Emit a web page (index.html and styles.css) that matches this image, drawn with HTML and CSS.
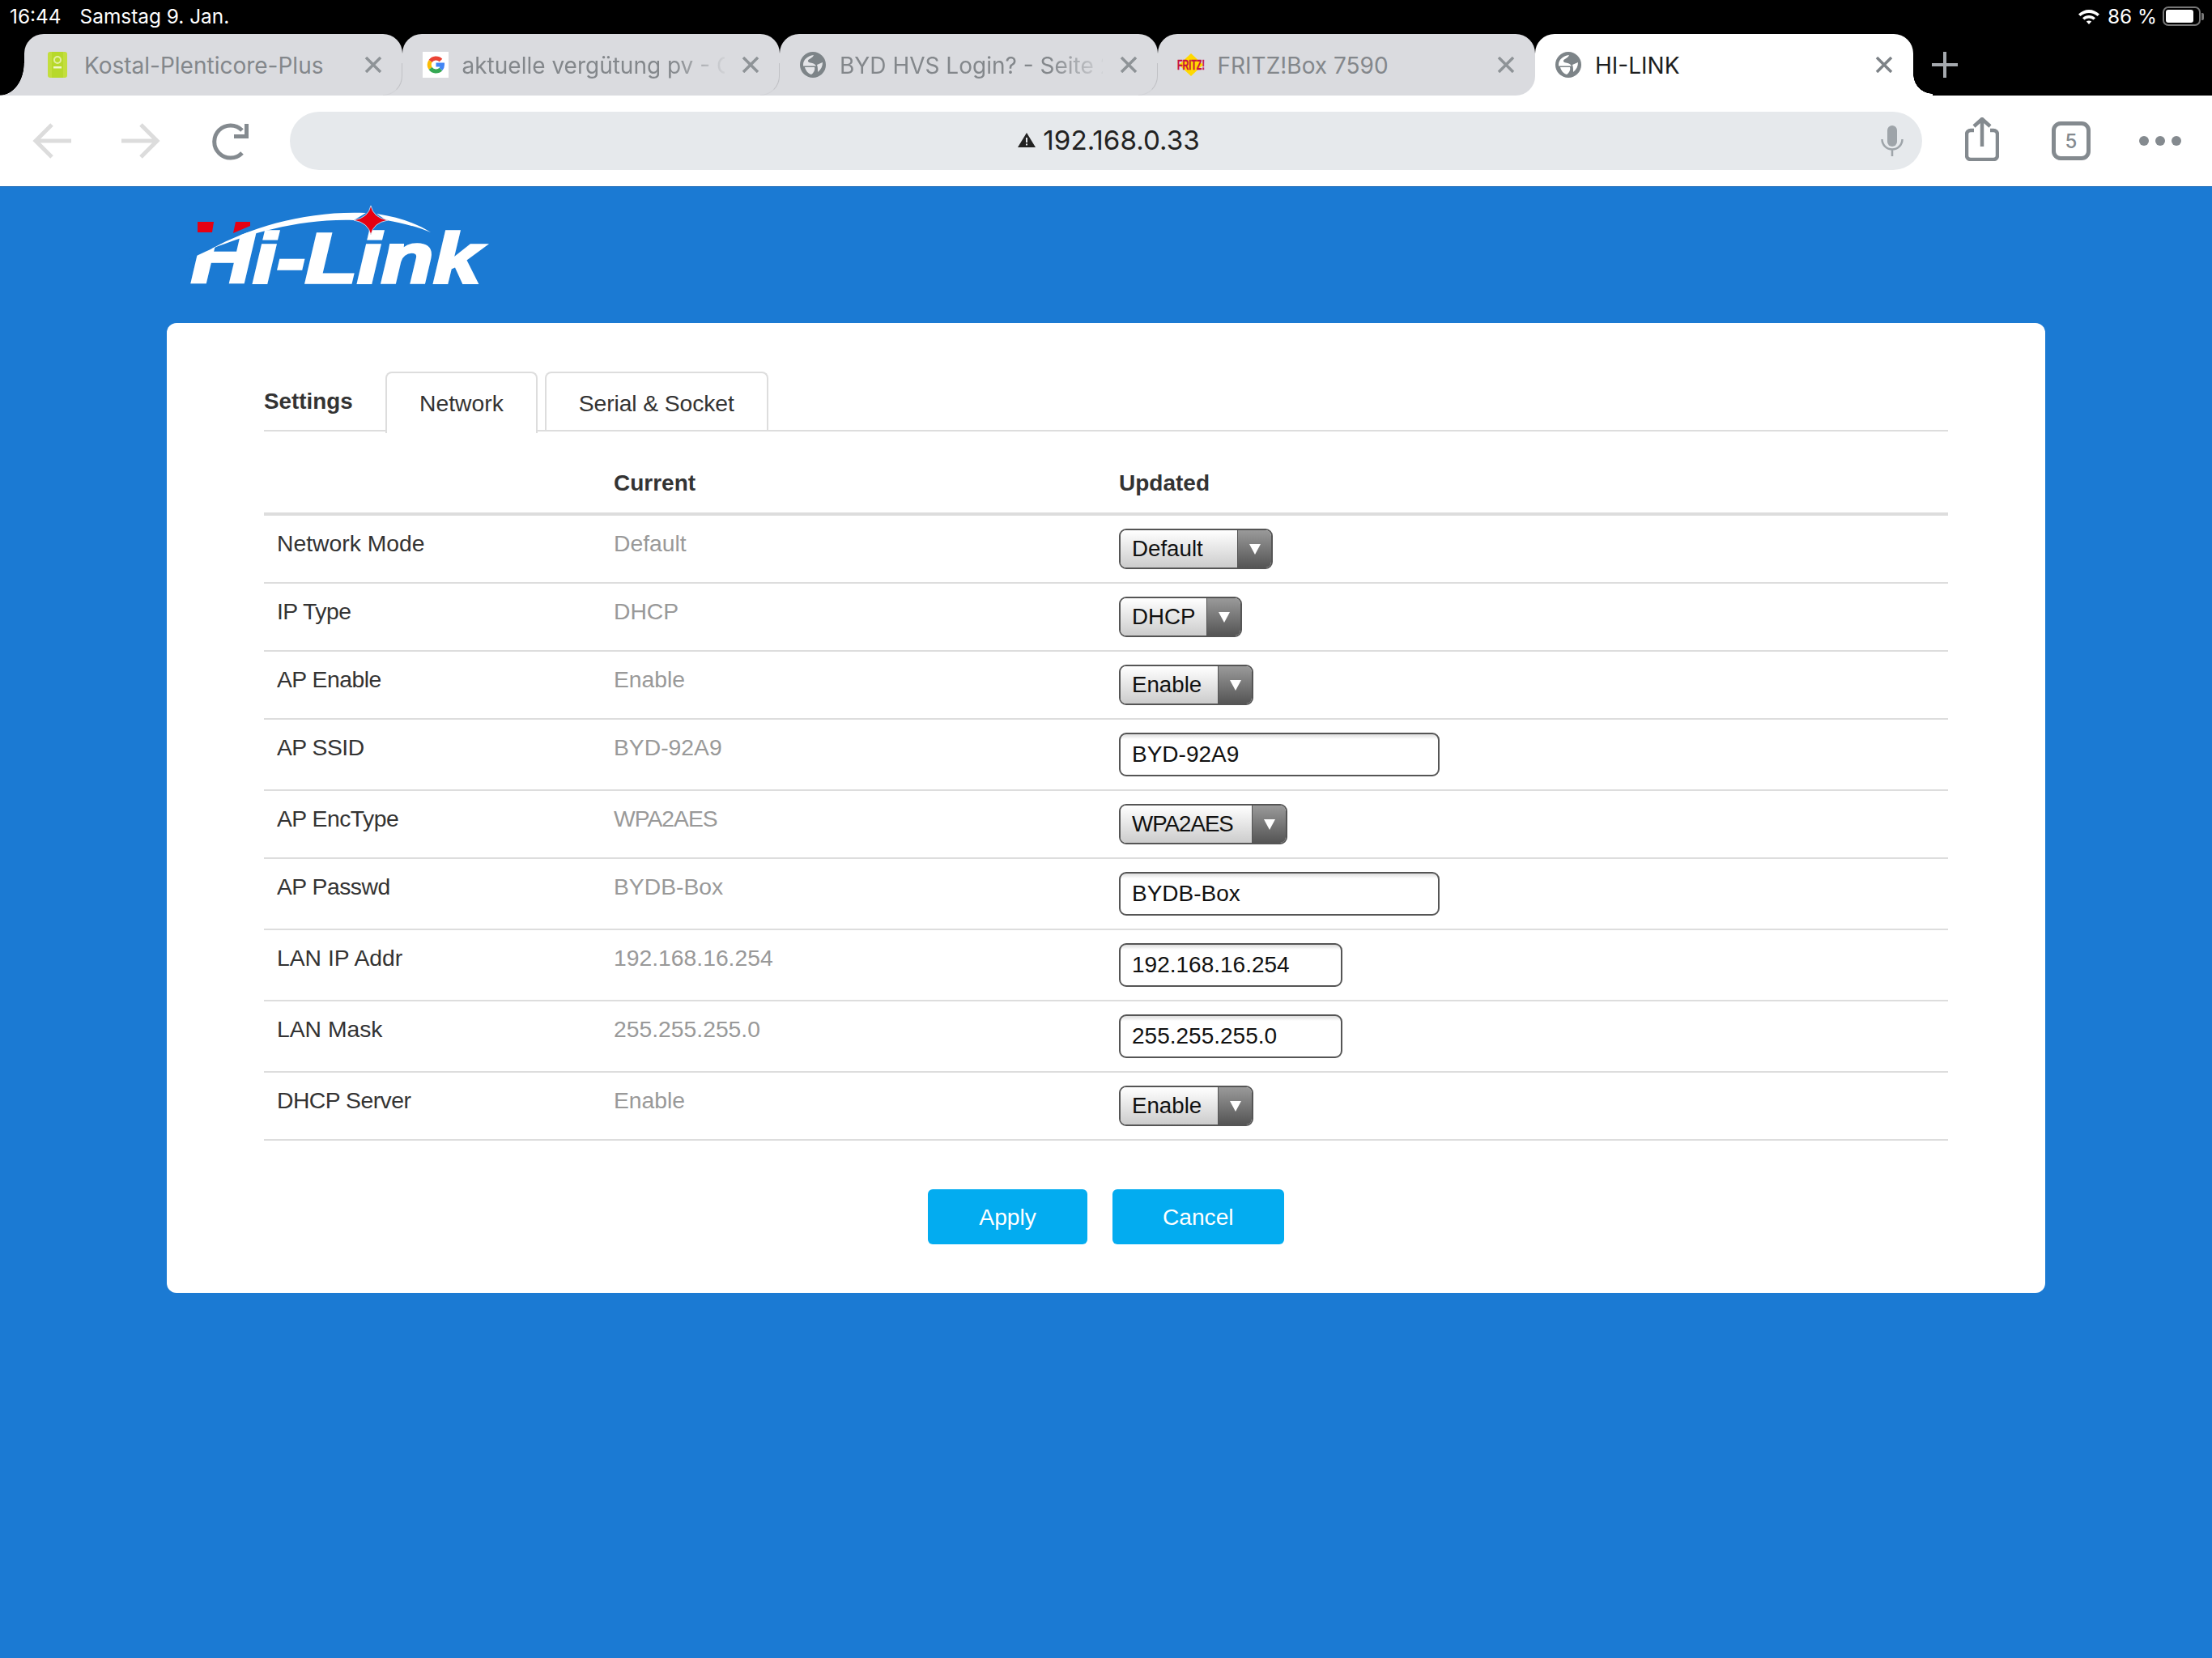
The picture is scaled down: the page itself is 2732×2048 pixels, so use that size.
FILE: index.html
```html
<!DOCTYPE html>
<html lang="en">
<head>
    <meta charset="UTF-8">
    <title>HI-LINK</title>
    <link rel="stylesheet" href="styles.css">
</head>

<body>
    <div class="statusbar">
        <div class="status-left"><span>16:44</span><span>Samstag 9. Jan.</span></div>
        <div class="status-right">
            <svg class="wifi" viewBox="0 0 28 20" width="28" height="20">
                <path d="M1 7.5C8.5 0 19.5 0 27 7.5L24.5 10C18.5 4.5 9.5 4.5 3.5 10Z" fill="#fff"/>
                <path d="M6 12.2C10.8 8 17.2 8 22 12.2L19.6 14.6C16.2 11.8 11.8 11.8 8.4 14.6Z" fill="#fff"/>
                <path d="M10.8 16.6C12.8 15.2 15.2 15.2 17.2 16.6L14 20Z" fill="#fff"/>
            </svg>
            <span>86 %</span>
            <div class="battery"><div class="battery-fill"></div></div>
            <div class="battery-nub"></div>
        </div>
    </div>

    <div class="tabstrip">
        <div class="tab tab-first">
            <span class="tab-icon">
                <svg viewBox="0 0 32 32" width="32" height="32">
                    <rect x="4" y="0" width="24" height="32" rx="3" fill="#c3de3d"/>
                    <rect x="9" y="0" width="14" height="32" fill="#b7d92b"/>
                    <circle cx="16" cy="10" r="4" fill="none" stroke="#e4efa2" stroke-width="2"/>
                    <rect x="11" y="18" width="10" height="2.5" fill="#f0f6cc"/>
                </svg>
            </span>
            <span class="tab-title">Kostal-Plenticore-Plus</span>
            <svg class="tab-close" viewBox="0 0 22 20" width="22" height="20"><path d="M2 1L20 19M20 1L2 19"/></svg>
        </div>
        <div class="tab">
            <span class="tab-icon tab-icon-white">
                <svg viewBox="0 0 32 32" width="32" height="32" fill="none" stroke-width="5">
                    <path d="M9.6 11.5A8.5 8.5 0 0 1 22.5 10.5" stroke="#ea4335"/>
                    <path d="M9.6 11.5A8.5 8.5 0 0 0 9.6 20.5" stroke="#fbbc05"/>
                    <path d="M9.6 20.5A8.5 8.5 0 0 0 22.5 21.5" stroke="#34a853"/>
                    <path d="M22.5 21.5A8.5 8.5 0 0 0 24.5 16H16.5" stroke="#4285f4"/>
                </svg>
            </span>
            <span class="tab-title tab-title-fade">aktuelle vergütung pv - G</span>
            <svg class="tab-close" viewBox="0 0 22 20" width="22" height="20"><path d="M2 1L20 19M20 1L2 19"/></svg>
        </div>
        <div class="tab">
            <span class="tab-icon">
                <svg viewBox="0 0 32 32" width="32" height="32">
                    <circle cx="16" cy="16" r="16" fill="#7d8488"/>
                    <path d="M4 16C4 10 9 5 17 4C16 7 13 8 11 9.5C9 11 10 13 13 13.5C16 14 19 15 20 17.5H4Z" fill="#e4e5e8"/>
                    <path d="M6 19H18C19 22 17 26 14 28C10 27 7 23 6 19Z" fill="#e4e5e8"/>
                    <path d="M21 16L28 13C28 18 26 22 22 25C22 21 22 19 21 16Z" fill="#e4e5e8"/>
                </svg>
            </span>
            <span class="tab-title tab-title-fade">BYD HVS Login? - Seite 2</span>
            <svg class="tab-close" viewBox="0 0 22 20" width="22" height="20"><path d="M2 1L20 19M20 1L2 19"/></svg>
        </div>
        <div class="tab tab-before-active">
            <span class="tab-icon">
                <svg viewBox="0 0 32 32" width="32" height="32">
                    <path d="M16 2L31 16L16 30L1 16Z" fill="#ffd900"/>
                    <text class="fritz-text" x="-1" y="21.500" textLength="34" lengthAdjust="spacingAndGlyphs">FRITZ!</text>
                </svg>
            </span>
            <span class="tab-title">FRITZ!Box 7590</span>
            <svg class="tab-close" viewBox="0 0 22 20" width="22" height="20"><path d="M2 1L20 19M20 1L2 19"/></svg>
        </div>
        <div class="tab tab-active">
            <span class="tab-icon">
                <svg viewBox="0 0 32 32" width="32" height="32">
                    <circle cx="16" cy="16" r="16" fill="#7d8488"/>
                    <path d="M4 16C4 10 9 5 17 4C16 7 13 8 11 9.5C9 11 10 13 13 13.5C16 14 19 15 20 17.5H4Z" fill="#fff"/>
                    <path d="M6 19H18C19 22 17 26 14 28C10 27 7 23 6 19Z" fill="#fff"/>
                    <path d="M21 16L28 13C28 18 26 22 22 25C22 21 22 19 21 16Z" fill="#fff"/>
                </svg>
            </span>
            <span class="tab-title">HI-LINK</span>
            <svg class="tab-close" viewBox="0 0 22 20" width="22" height="20"><path d="M2 1L20 19M20 1L2 19"/></svg>
        </div>
        <svg class="tab-new" viewBox="0 0 32 32" width="32" height="32"><path d="M16 0V32M0 16H32"/></svg>
    </div>

    <div class="toolbar">
        <svg class="nav-back" viewBox="0 0 48 44" width="48" height="44"><path d="M24 2L4 22L24 42M4 22H48"/></svg>
        <svg class="nav-forward" viewBox="0 0 48 44" width="48" height="44"><path d="M24 2L44 22L24 42M44 22H0"/></svg>
        <svg class="nav-reload" viewBox="0 0 46 48" width="46" height="48">
            <path d="M37 11A20 20 0 1 0 37 39" fill="none" stroke="#848a8f" stroke-width="5"/>
            <path d="M40 3H45V21H27V16H40Z" fill="#848a8f"/>
        </svg>
        <div class="urlbar">
            <span></span>
            <div class="url">
                <svg viewBox="0 0 22 18" width="22" height="18">
                    <path d="M11 0L22 18H0Z" fill="#222"/>
                    <rect x="10" y="6" width="2" height="6" fill="#e6e9ec"/>
                    <rect x="10" y="13.5" width="2" height="2" fill="#e6e9ec"/>
                </svg>
                <span>192.168.0.33</span>
            </div>
            <svg class="mic" viewBox="0 0 28 38" width="28" height="38">
                <rect x="8" y="0" width="12" height="26" rx="6" fill="#9ea4a9"/>
                <path d="M1.5 17A12.5 12.5 0 0 0 26.500 17M14 30V38" fill="none" stroke="#9ea4a9" stroke-width="2.5"/>
            </svg>
        </div>
        <svg class="tool-share" viewBox="0 0 42 54" width="42" height="54">
            <path d="M11 16H7A5 5 0 0 0 2 21V47A5 5 0 0 0 7 52H35A5 5 0 0 0 40 47V21A5 5 0 0 0 35 16H31" fill="none" stroke="#848a8f" stroke-width="4.5"/>
            <path d="M21 36V3M11 11L21 2L31 11" fill="none" stroke="#848a8f" stroke-width="4.5"/>
        </svg>
        <div class="tool-count">5</div>
        <div class="tool-more"><i></i><i></i><i></i></div>
    </div>

    <div class="logo-area">
        <svg class="logo" viewBox="0 0 380 125" width="380" height="125">
            <text class="logo-word" x="6" y="99" textLength="358" lengthAdjust="spacingAndGlyphs">Hi-Link</text>
            <path d="M0 0H222V13C150 10 80 30 30 58L0 72Z" fill="#1b7ad3"/>
            <path d="M14 24H34L32 37H14Z" fill="#e60012"/>
            <path d="M61 24H79L79 29L58 38Z" fill="#e60012"/>
            <path d="M30 58C80 30 150 10 222 13L207 22C140 20 80 38 30 58Z" fill="#fff"/>
            <path d="M235 14C262 18 285 26 302 37C285 30 265 25 247 22Z" fill="#fff"/>
            <path d="M228 4Q231 19 249 22Q231 25 228 40Q225 25 207 22Q225 19 228 4Z" fill="#e60012" stroke="#dfe9f5" stroke-width="0.8"/>
        </svg>
    </div>

    <div class="card">
        <div class="settings-nav">
            <div class="settings-title">Settings</div>
            <div class="settings-tab current">Network</div>
            <div class="settings-tab">Serial &amp; Socket</div>
        </div>

        <table class="settings-table">
            <thead>
                <tr><th></th><th>Current</th><th>Updated</th></tr>
            </thead>
            <tbody>
                <tr>
                    <td>Network Mode</td>
                    <td class="current-value">Default</td>
                    <td><div class="select select-default"><span class="select-value">Default</span><span class="select-arrow"></span></div></td>
                </tr>
                <tr>
                    <td class="tight">IP Type</td>
                    <td class="current-value">DHCP</td>
                    <td><div class="select select-dhcp"><span class="select-value">DHCP</span><span class="select-arrow"></span></div></td>
                </tr>
                <tr>
                    <td class="tight">AP Enable</td>
                    <td class="current-value">Enable</td>
                    <td><div class="select select-enable"><span class="select-value">Enable</span><span class="select-arrow"></span></div></td>
                </tr>
                <tr>
                    <td class="tight">AP SSID</td>
                    <td class="current-value">BYD-92A9</td>
                    <td><div class="field field-long">BYD-92A9</div></td>
                </tr>
                <tr>
                    <td class="tight">AP EncType</td>
                    <td class="current-value wpa">WPA2AES</td>
                    <td><div class="select select-enc"><span class="select-value wpa">WPA2AES</span><span class="select-arrow"></span></div></td>
                </tr>
                <tr>
                    <td class="tight">AP Passwd</td>
                    <td class="current-value">BYDB-Box</td>
                    <td><div class="field field-long">BYDB-Box</div></td>
                </tr>
                <tr>
                    <td>LAN IP Addr</td>
                    <td class="current-value">192.168.16.254</td>
                    <td><div class="field field-short">192.168.16.254</div></td>
                </tr>
                <tr>
                    <td>LAN Mask</td>
                    <td class="current-value">255.255.255.0</td>
                    <td><div class="field field-short">255.255.255.0</div></td>
                </tr>
                <tr>
                    <td class="tight">DHCP Server</td>
                    <td class="current-value">Enable</td>
                    <td><div class="select select-enable"><span class="select-value">Enable</span><span class="select-arrow"></span></div></td>
                </tr>
            </tbody>
        </table>

        <div class="actions">
            <button class="btn-apply">Apply</button>
            <button class="btn-cancel">Cancel</button>
        </div>
    </div>
</body>
</html>
```

FILE: styles.css
```css
html, body {
    margin: 0;
    min-height: 100%;
}
body {
    background-color: #1b7ad3;
    font-family: 'Liberation Sans', Arial, sans-serif;
    font-size: 28.3px;
    color: #333;
    height: 2048px;
    overflow: hidden;
}

/* iPad status bar */
.statusbar {
    height: 42px;
    box-sizing: border-box;
    background: #000;
    color: #fff;
    font-family: Inter, sans-serif;
    font-size: 24.4px;
    display: flex;
    justify-content: space-between;
    align-items: center;
    padding: 0 10px 2px 12px;
}
.status-left {
    display: flex;
    gap: 23px;
}
.status-right {
    display: flex;
    align-items: center;
    gap: 9px;
}
.battery {
    width: 47px;
    height: 24px;
    box-sizing: border-box;
    border: 2px solid #777;
    border-radius: 7px;
    padding: 2px;
    margin-left: -2px;
}
.battery-fill {
    width: 34px;
    height: 100%;
    background: #fff;
    border-radius: 3px;
}
.battery-nub {
    width: 3px;
    height: 9px;
    background: #777;
    margin-left: -8px;
    border-radius: 0 2px 2px 0;
}

/* browser tabs */
.tabstrip {
    height: 76px;
    background: #000;
    display: flex;
    padding-left: 30px;
    position: relative;
    z-index: 0;
}
.tab {
    width: 466.5px;
    flex: none;
    box-sizing: border-box;
    background: #dadbdf;
    border-radius: 24px 24px 0 0;
    display: flex;
    align-items: center;
    padding: 2px 25px 0 25px;
    gap: 17px;
    color: #83878b;
    font-family: Inter, sans-serif;
    font-size: 28px;
    position: relative;
}
.tab::after {
    content: "";
    position: absolute;
    right: 0;
    bottom: 0;
    width: 24px;
    height: 40px;
    box-sizing: border-box;
    border-right: 1.5px solid #c0c1c5;
    border-bottom: 1.5px solid #d2d3d7;
    border-bottom-right-radius: 24px;
}
.tab-first::before {
    content: "";
    position: absolute;
    left: -30px;
    bottom: 0;
    width: 30px;
    height: 40px;
    background: radial-gradient(ellipse 30px 40px at 0 0, #000 98%, #dadbdf 100%);
}
.tab-before-active {
    border-radius: 24px 24px 24px 0;
}
.tab-before-active::before {
    content: "";
    position: absolute;
    right: 0;
    bottom: 0;
    width: 24px;
    height: 24px;
    background: #fff;
    z-index: -1;
}
.tab-before-active::after {
    display: none;
}
.tab-active {
    background: #fff;
    color: #1d1e20;
}
.tab-active::after {
    right: -24px;
    width: 24px;
    height: 26px;
    border: 0;
    border-radius: 0;
    background: radial-gradient(circle 24px at 100% 0, #000 98%, #fff 100%);
}
.tab-icon {
    width: 32px;
    height: 32px;
    flex: none;
    display: block;
    margin-top: -2px;
}
.tab-icon-white {
    background: #fff;
}
.tab-icon svg {
    display: block;
    overflow: visible;
}
.tab-title {
    flex: 1;
    min-width: 0;
    white-space: nowrap;
}
.tab-title-fade {
    -webkit-mask-image: linear-gradient(to right, #000 80%, rgba(0, 0, 0, 0.1) 100%);
    mask-image: linear-gradient(to right, #000 80%, rgba(0, 0, 0, 0.1) 100%);
}
.tab-close {
    flex: none;
    fill: none;
    stroke: #8e9397;
    stroke-width: 3.5;
    margin-left: 4px;
    margin-top: -2px;
}
.tab-active .tab-close {
    stroke: #7d8287;
}
.tab-new {
    flex: none;
    align-self: center;
    margin-left: 23px;
    fill: none;
    stroke: #a5a9ae;
    stroke-width: 4;
}
.fritz-text {
    font-family: 'Liberation Sans', sans-serif;
    font-weight: bold;
    font-size: 16px;
    fill: #c8123f;
    stroke: #c8123f;
    stroke-width: 0.4;
}

/* toolbar under the tabs */
.toolbar {
    height: 112px;
    box-sizing: border-box;
    background: #fff;
    display: flex;
    align-items: center;
    padding-left: 40px;
}
.nav-back, .nav-forward {
    fill: none;
    stroke: #dcdcdc;
    stroke-width: 5;
    flex: none;
}
.nav-forward {
    margin-left: 62px;
}
.nav-reload {
    margin-left: 64px;
    flex: none;
}
.urlbar {
    margin-left: 50px;
    width: 2016px;
    height: 72px;
    flex: none;
    box-sizing: border-box;
    background: #e6e9ec;
    border-radius: 36px;
    display: grid;
    grid-template-columns: 1fr auto 1fr;
    align-items: center;
    padding-right: 23px;
}
.url {
    display: flex;
    align-items: center;
    gap: 9px;
    color: #222;
    font-family: Inter, sans-serif;
    font-size: 33.2px;
    margin-left: 30px;
    margin-top: -2px;
}
.mic {
    justify-self: end;
}
.tool-share {
    margin-left: 53px;
    margin-top: -4px;
    flex: none;
}
.tool-count {
    margin-left: 65px;
    width: 48px;
    height: 48px;
    flex: none;
    box-sizing: border-box;
    border: 5px solid #848a8f;
    border-radius: 11px;
    color: #848a8f;
    font-family: Inter, sans-serif;
    font-size: 24px;
    font-weight: 500;
    display: flex;
    align-items: center;
    justify-content: center;
}
.tool-more {
    margin-left: 60px;
    display: flex;
    gap: 8px;
}
.tool-more i {
    width: 12px;
    height: 12px;
    border-radius: 50%;
    background: #848a8f;
}

/* page content */
.logo-area {
    height: 169px;
    box-sizing: border-box;
    border-top: 1px solid #1a69b8;
    padding: 19px 0 0 230px;
}
.logo {
    display: block;
}
.logo-word {
    font-family: 'Liberation Sans', sans-serif;
    font-weight: bold;
    font-style: italic;
    font-size: 88px;
    fill: #fff;
    stroke: #fff;
    stroke-width: 3.500;
}
.card {
    margin: 0 206px;
    background: #fff;
    border-radius: 12px;
    padding: 60px 120px;
}
.settings-nav {
    display: flex;
    align-items: stretch;
    height: 74px;
    box-sizing: border-box;
    border-bottom: 2px solid #ddd;
}
.settings-title {
    width: 150px;
    font-weight: bold;
    font-size: 27.8px;
    line-height: 74px;
}
.settings-tab {
    border: 2px solid #ddd;
    border-bottom: 0;
    border-radius: 8px 8px 0 0;
    padding: 0 40px;
    line-height: 74px;
    height: 72px;
    margin-left: 9px;
    letter-spacing: -0.1px;
}
.settings-tab.current {
    margin-left: 0;
    height: 74px;
    background: #fff;
    letter-spacing: 0;
}
.settings-table {
    width: 100%;
    table-layout: fixed;
    border-collapse: separate;
    border-spacing: 0;
}
.settings-table th:nth-child(1) { width: 415px; }
.settings-table th:nth-child(2) { width: 625px; }
.settings-table th {
    text-align: left;
    font-size: 28px;
    height: 104px;
    box-sizing: border-box;
    padding: 28px 16px 0 16px;
    border-bottom: 4px solid #ddd;
}
.settings-table th:nth-child(2) {
    padding-left: 17px;
}
.settings-table td {
    vertical-align: top;
    padding: 16px;
    line-height: 36px;
    border-bottom: 2px solid #ddd;
}
.settings-table td:nth-child(2) {
    padding-left: 17px;
}
.settings-table td.current-value {
    color: #999;
}
.settings-table td.tight {
    letter-spacing: -0.5px;
}
.settings-table td.wpa, .select-value.wpa {
    letter-spacing: -1px;
}
.select {
    display: flex;
    height: 50px;
    box-sizing: border-box;
    border: 2px solid #555;
    border-radius: 9px;
    overflow: hidden;
    color: #111;
    font-size: 27.7px;
}
.select-default { width: 190px; }
.select-dhcp { width: 152px; }
.select-enable { width: 166px; }
.select-enc { width: 208px; }
.select-value {
    flex: 1;
    padding-left: 14px;
    line-height: 46px;
    background: linear-gradient(#fff, #ccc);
}
.select-arrow {
    width: 41px;
    flex: none;
    border-left: 1px solid #555;
    background: linear-gradient(#9a9a9a, #555);
    display: flex;
    align-items: center;
    justify-content: center;
}
.select-arrow::after {
    content: "";
    border-left: 7px solid transparent;
    border-right: 7px solid transparent;
    border-top: 13px solid #fff;
}
.field {
    height: 54px;
    box-sizing: border-box;
    border: 2px solid #555;
    border-radius: 9px;
    padding-left: 14px;
    color: #111;
    font-size: 28px;
    line-height: 50px;
    background: linear-gradient(#ddd, #fff 6px);
}
.field-long { width: 396px; }
.field-short { width: 276px; }
.actions {
    display: flex;
    justify-content: center;
    gap: 31px;
    margin-top: 60px;
}
.actions button {
    height: 68px;
    border: none;
    border-radius: 6px;
    background-color: #03acf0;
    color: #fff;
    font-family: inherit;
    font-size: 28.2px;
}
.btn-apply {
    padding: 0 63px;
}
.btn-cancel {
    padding: 0 62px;
}
```
